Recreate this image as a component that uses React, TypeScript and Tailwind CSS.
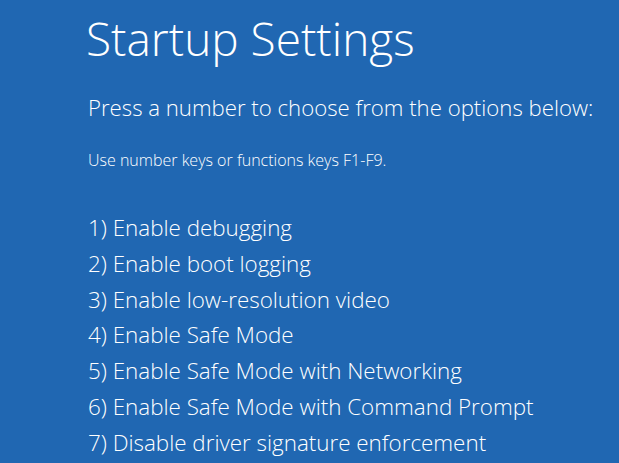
import React from 'react';

const options = [
  'Enable debugging',
  'Enable boot logging',
  'Enable low-resolution video',
  'Enable Safe Mode',
  'Enable Safe Mode with Networking',
  'Enable Safe Mode with Command Prompt',
  'Disable driver signature enforcement',
];

const App: React.FC = () => {
  return (
    <div
      className="min-h-screen w-full overflow-hidden bg-[#2067b2] text-white font-light"
      style={{ fontFamily: '"Open Sans", "Noto Sans", sans-serif' }}
    >
      <div className="pl-[86px] pt-[8px]">
        <h1 className="text-[46px] leading-[60px] font-light">Startup Settings</h1>
        <p className="mt-[25px] ml-[2px] text-[22.2px] leading-[30px]">Press a number to choose from the options below:</p>
        <p className="mt-[27px] ml-[2px] text-[16px] leading-[20px]">Use number keys or functions keys F1-F9.</p>

        <ol className="mt-[40px] ml-[2px] flex flex-col">
          {options.map((opt, i) => (
            <li key={opt} className="text-[22.4px] leading-[35.8px]">
              {i + 1}) {opt}
            </li>
          ))}
        </ol>
      </div>
    </div>
  );
};

export default App;
